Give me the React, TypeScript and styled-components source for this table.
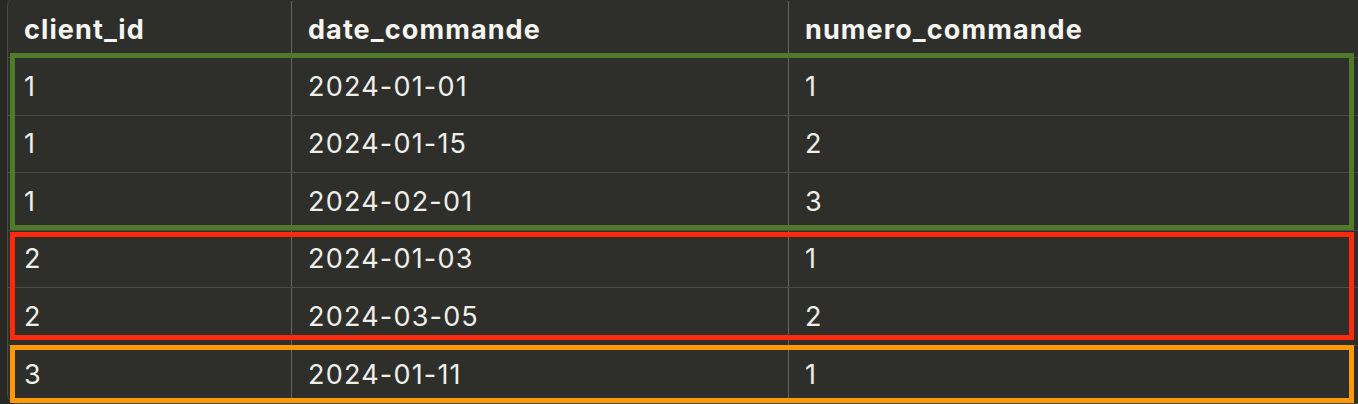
import React from "react";
import styled, { createGlobalStyle } from "styled-components";

const GlobalStyle = createGlobalStyle`
  html, body {
    margin: 0;
    padding: 0;
    background: #282825;
    overflow: hidden;
  }
  body {
    font-family: Inter, "Noto Sans", sans-serif;
  }
`;

const Page = styled.div`
  width: 1358px;
  height: 404px;
  padding-left: 7px;
  box-sizing: border-box;
  overflow: hidden;
  background: #282825;
`;

const Table = styled.div`
  margin-top: -4px;
  width: 1420px;
  background: #2e2e2a;
  border: 1px solid #4a4a46;
  border-radius: 10px;
  box-sizing: border-box;
`;

const HeaderRow = styled.div`
  display: grid;
  grid-template-columns: 284px 497px 1fr;
  height: 61px;
  padding-top: 4px;
  box-sizing: border-box;
  border-bottom: 1px solid #4a4a46;
`;

const Row = styled.div<{ $last?: boolean }>`
  display: grid;
  grid-template-columns: 284px 497px 1fr;
  height: 57.5px;
  box-sizing: border-box;
  border-bottom: ${(p) => (p.$last ? "none" : "1px solid #4a4a46")};
`;

const Cell = styled.div<{ $head?: boolean; $divider?: boolean }>`
  display: flex;
  align-items: center;
  padding-left: 16px;
  border-right: ${(p) => (p.$divider ? "1px solid #66665f" : "none")};
  color: ${(p) => (p.$head ? "#f5f5f1" : "#efefea")};
  font-size: 27px;
  font-weight: ${(p) => (p.$head ? 700 : 400)};
  letter-spacing: ${(p) => (p.$head ? "1.1px" : "1.2px")};
  white-space: nowrap;
`;

const Group = styled.div`
  position: relative;
`;

const Frame = styled.div<{ $top: number; $bottom: number; $color: string }>`
  position: absolute;
  left: 2px;
  width: 1344px;
  top: ${(p) => p.$top}px;
  bottom: ${(p) => p.$bottom}px;
  border: 5px solid ${(p) => p.$color};
  box-sizing: border-box;
  pointer-events: none;
`;

type Rec = [string, string, string];

const groups: { color: string; top: number; bottom: number; rows: Rec[] }[] = [
  {
    color: "#4f7a28",
    top: -5,
    bottom: 1,
    rows: [
      ["1", "2024-01-01", "1"],
      ["1", "2024-01-15", "2"],
      ["1", "2024-02-01", "3"],
    ],
  },
  {
    color: "#ff2a0c",
    top: 1.5,
    bottom: 5.5,
    rows: [
      ["2", "2024-01-03", "1"],
      ["2", "2024-03-05", "2"],
    ],
  },
  {
    color: "#ff9a06",
    top: -0.5,
    bottom: 0,
    rows: [["3", "2024-01-11", "1"]],
  },
];

export default function App() {
  return (
    <>
      <GlobalStyle />
      <Page>
        <Table>
          <HeaderRow>
            <Cell $head $divider>client_id</Cell>
            <Cell $head $divider>date_commande</Cell>
            <Cell $head>numero_commande</Cell>
          </HeaderRow>
          {groups.map((g, gi) => (
            <Group key={gi}>
              {g.rows.map((r, ri) => (
                <Row
                  key={ri}
                  $last={gi === groups.length - 1 && ri === g.rows.length - 1}
                >
                  <Cell $divider>{r[0]}</Cell>
                  <Cell $divider>{r[1]}</Cell>
                  <Cell>{r[2]}</Cell>
                </Row>
              ))}
              <Frame $top={g.top} $bottom={g.bottom} $color={g.color} />
            </Group>
          ))}
        </Table>
      </Page>
    </>
  );
}
